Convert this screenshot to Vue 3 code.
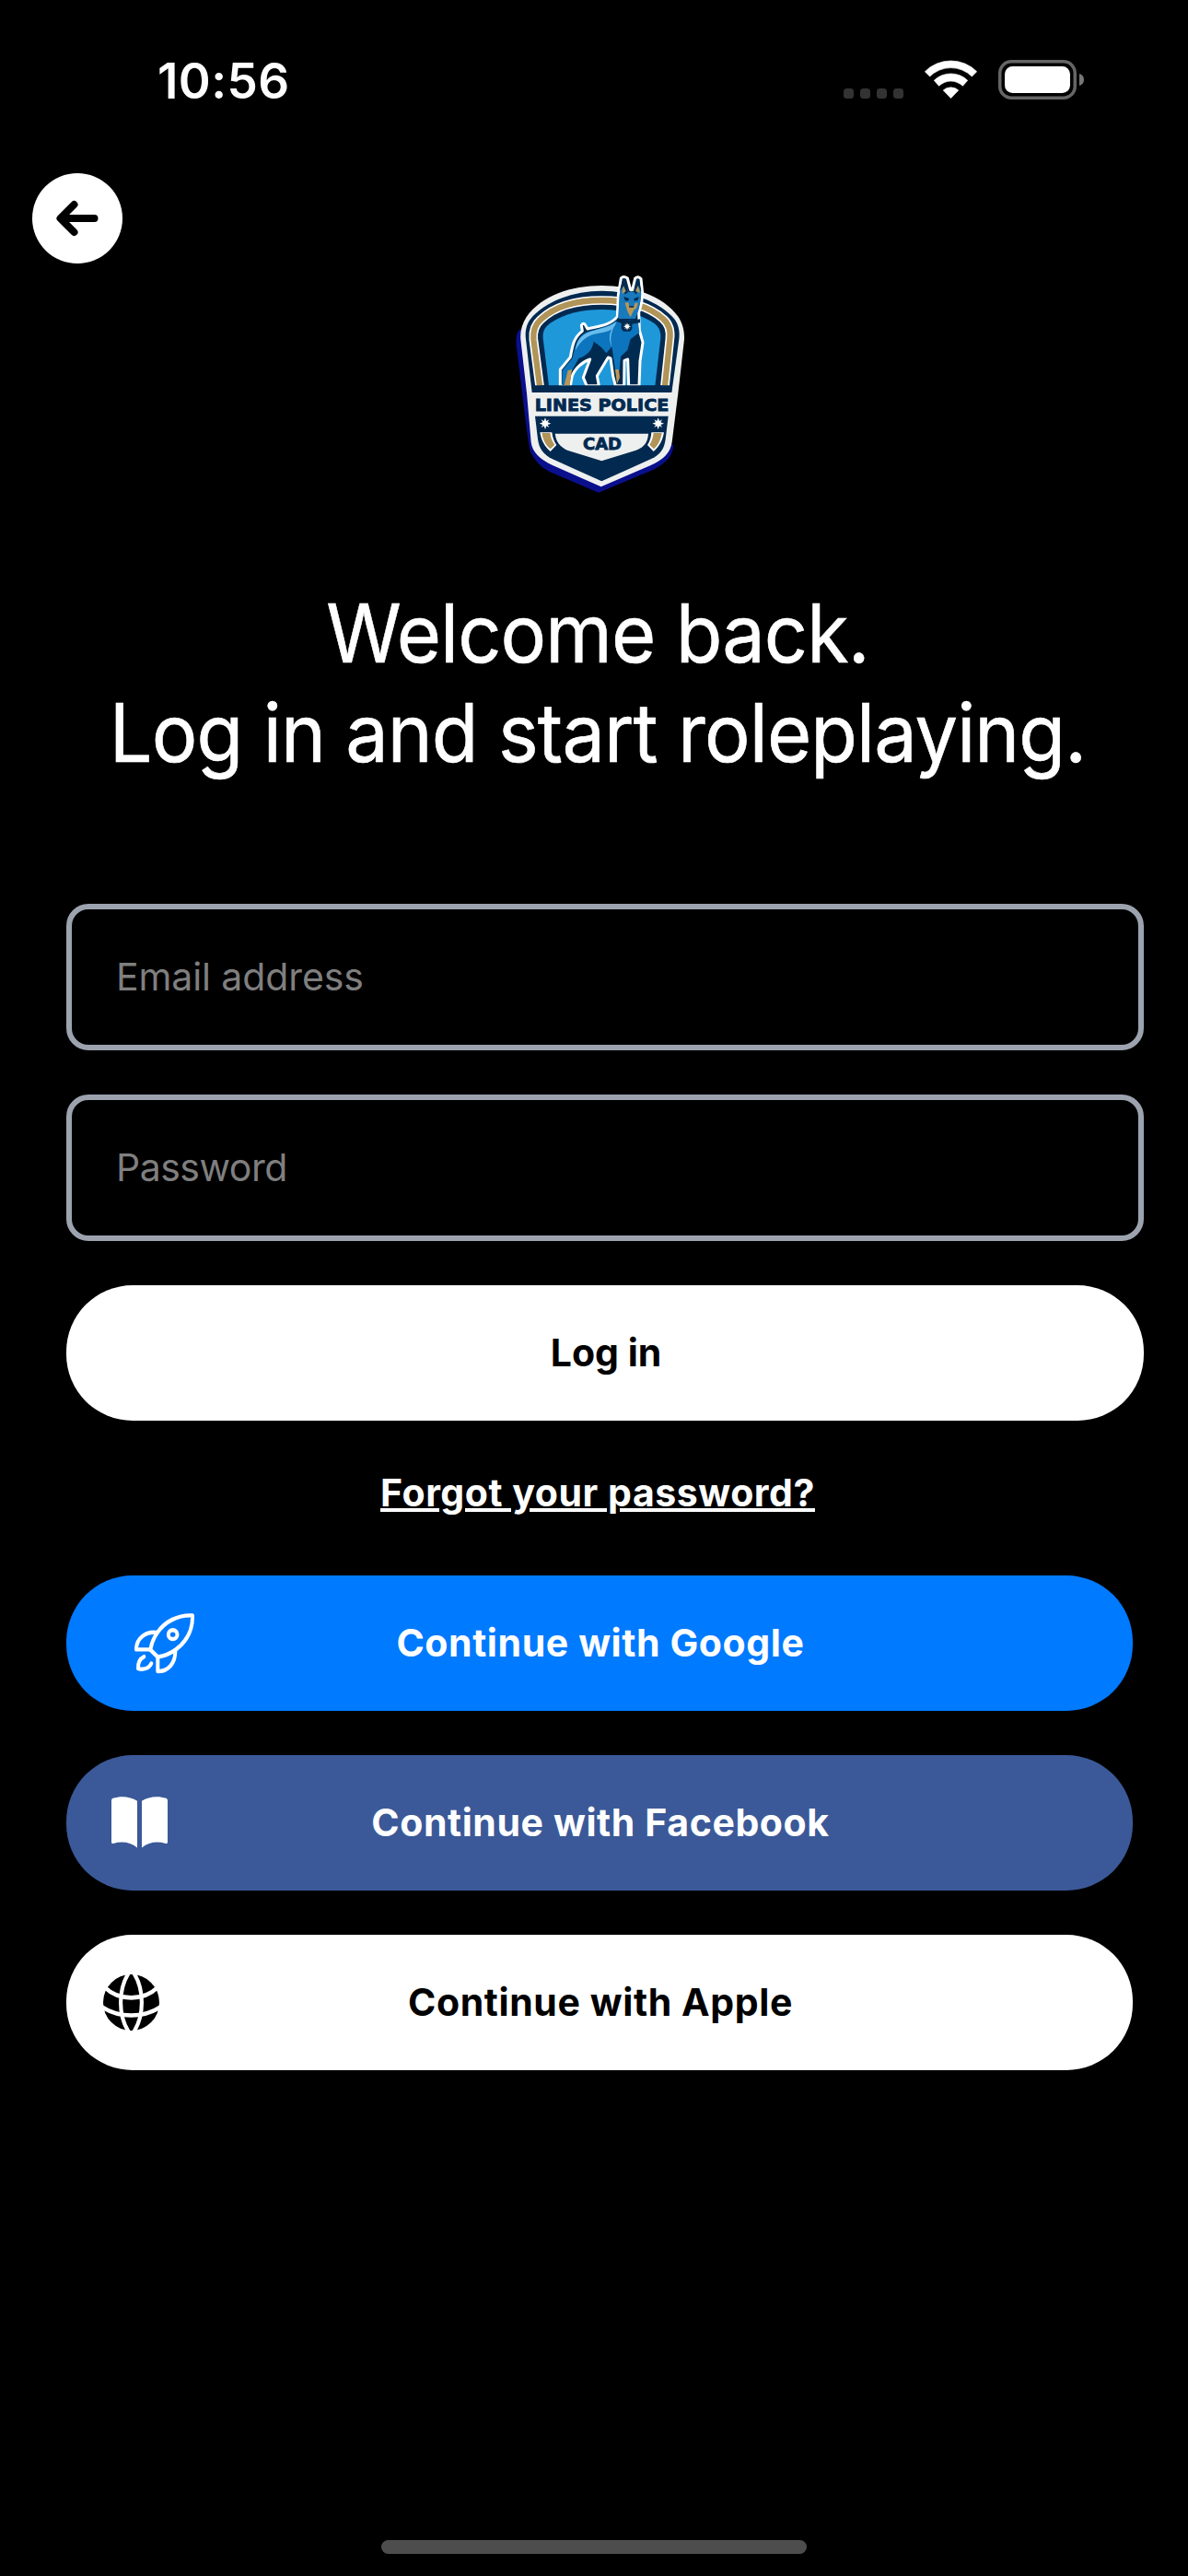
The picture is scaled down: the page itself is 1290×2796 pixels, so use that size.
<script setup>
import { ref } from 'vue'

const email = ref('')
const password = ref('')
const star = 'M0-19 4-8 13-13 8-4 19 0 8 4 13 13 4 8 0 19-4 8-13 13-8 4-19 0-8-4-13-13-4-8Z'
</script>

<template>
  <main class="screen">
    <header class="status">
      <time class="clock">10:56</time>
      <div class="indicators">
        <div class="cell"><i v-for="n in 4" :key="n"></i></div>
        <svg class="wifi" viewBox="371 75 172 126" fill="#fff" stroke="#fff" stroke-width="2" stroke-linejoin="round">
          <path d="M372 113A120 120 0 0 1 542 113L526 129A98 98 0 0 0 388 129Z" />
          <path d="M402 142A79 79 0 0 1 512 142L496 160A56 56 0 0 0 418 160Z" />
          <path d="M432 174A38 38 0 0 1 482 174L457 200Z" />
        </svg>
        <svg class="battery" viewBox="0 0 94 43">
          <rect x="1.75" y="1.75" width="81.5" height="39.5" rx="12.5" fill="none" stroke="#666" stroke-width="3.5" />
          <rect x="7" y="7" width="71" height="29" rx="8.5" fill="#fff" />
          <path d="M88 15C91.500 16 93 18.500 93 21.500S91.500 27 88 28Z" fill="#777" />
        </svg>
      </div>
    </header>

    <button class="back" aria-label="Back">
      <svg viewBox="0 0 98 98" fill="none" stroke="#000" stroke-width="8" stroke-linecap="round" stroke-linejoin="round">
        <path d="M67.500 49H31M45.500 34 30.500 49 45.500 64" />
        <path d="M31 49 38 43V55Z" fill="#000" stroke="none" />
      </svg>
    </button>

    <svg class="logo" viewBox="0 30 660 780">
      <path fill="#0a0f8c" d="M74 232C62 244 60 262 62 285L96 560L104 615C111 650 138 680 172 697L330 764L505 691C548 671 572 645 574 610Z" />
      <path fill="#eef0f0" d="M340 90C440 90 540 122 590 192C605 215 610 240 609 265L589 440L569 600C564 632 545 655 500 675L338 745L180 675C138 655 114 632 110 600L96 440L76 265C74 240 80 215 95 192C145 122 240 90 340 90Z" />
      <path fill="#022a50" d="M340 107C430 107 530 140 578 200C591 218 595 240 592 265L568 438H113L93 265C90 240 94 218 107 200C155 140 250 107 340 107Z" />
      <g fill="none">
        <path stroke="#fff" stroke-width="29" d="M138 416L118 265C115 235 124 216 142 200C190 155 265 138 340 138C415 138 492 155 540 198C560 215 566 235 562 265L546 416" />
        <path stroke="#b19458" stroke-width="19" d="M138 416L118 265C115 235 124 216 142 200C190 155 265 138 340 138C415 138 492 155 540 198C560 215 566 235 562 265L546 416" />
      </g>
      <path fill="#1f98da" d="M168 416L149 262C147 238 155 225 175 211C220 180 280 168 340 168C410 168 470 185 508 211C528 225 533 240 532 262L514 416Z" />

      <!-- Dog silhouette with its white keyline -->
      <path fill="#002b50" stroke="#fff" stroke-width="9" stroke-linejoin="round" d="M403 66Q411 57 424 66L434 104H440L449 66Q459 57 468 68L473 115L470 145L461 178L463 235L474 275L465 335L462 416H428L425 330L414 334L413 416H385L377 385L369 327L361 324L325 384L331 416H291L280 389L302 330C277 338 250 362 243 388L238 416H205V363L238 323C245 282 250 258 277 238L274 219Q281 209 287 219L294 231C330 222 370 218 391 191L394 120Z" />
      <path fill="#0c75bd" d="M391 202C365 226 329 228 290 242C260 255 252 291 245 326L211 367V414H235L242 369L265 327C295 318 311 295 314 272C332 285 344 293 355 310L373 289L385 368L398 365L402 321L424 300L434 264L463 243L458 204Z" />
      <path fill="#68bcec" d="M388 207C361 230 322 230 290 245C265 258 257 278 255 301C273 263 300 250 329 245C370 240 382 230 388 207ZM388 207C363 239 360 265 374 291C364 258 374 235 388 207Z" />
      <path fill="#1979bd" d="M399 112L410 76L428 111H444L458 76L469 118L462 164L450 198H393Z" />
      <path fill="#002b50" d="M398 108L410 67L426 111L416 119L411 92ZM470 110L459 67L445 111L453 119L459 91ZM412 126L430 132L425 140L416 138ZM445 132L462 126L457 138L446 140ZM427 157H446L443 168H431Z" />
      <path fill="#bb9755" d="M411 90L419 109L406 116ZM458 90L465 113L450 108ZM416 146L427 144L430 161H444L449 146L458 146L454 163L444 171L434 193L424 174ZM218 414L230 366L243 363L236 414ZM384 363H396L399 389L390 410Z" />
      <path fill="#002b50" d="M391 196Q430 209 465 199V211L439 215V230L433 239H411L404 230V212L388 207Z" />
      <path :d="star" transform="translate(423 223) scale(.64)" fill="#fff" />
      <path fill="#022a50" d="M113 415H570L567 438H115Z" />

      <text class="crest-text" x="122" y="498" textLength="437" lengthAdjust="spacingAndGlyphs" font-size="54">LINES POLICE</text>

      <path fill="#022a50" d="M123 515H557L548 590C544 620 532 640 500 655L340 727L180 655C150 640 136 620 132 590Z" />
      <path fill="#eef0f0" d="M188 572H492C490 599 480 615 452 626L340 661L228 626C204 614 192 600 188 572Z" />
      <path fill="#fff" d="M139 568H178C180 585 185 597 193 609L173 630C154 614 144 596 139 568ZM502 568H543C538 596 528 614 509 630L489 609C497 597 501 585 502 568Z" />
      <path fill="#b19458" d="M145 570H172C174 586 179 598 187 608L173 622C156 608 149 592 145 570ZM509 570H536C532 592 525 608 510 622L496 608C503 598 507 586 509 570Z" />
      <path :d="star" transform="translate(156 539)" fill="#fff" />
      <path :d="star" transform="translate(524 539)" fill="#fff" />
      <text class="crest-text" x="279" y="624" textLength="126" lengthAdjust="spacingAndGlyphs" font-size="53">CAD</text>
    </svg>

    <h1>Welcome back.<br />Log in and start roleplaying.</h1>

    <form class="form" @submit.prevent>
      <input v-model="email" type="email" class="email" placeholder="Email address" />
      <input v-model="password" type="password" class="password" placeholder="Password" />
      <button class="pill login"><span>Log in</span></button>
    </form>

    <a class="forgot">Forgot your password?</a>

    <section class="social">
      <button class="pill google">
        <svg class="rocket" viewBox="282 159 208 188" preserveAspectRatio="none" fill="none" stroke="#fff" stroke-width="12" stroke-linecap="round" stroke-linejoin="round">
          <path d="M477 171C430 169 388 188 362 222C349 239 343 253 340 272L364 293C386 290 405 283 423 271C461 245 479 214 477 171Z" />
          <path d="M360 221C323 217 294 239 294 271H340M364 293V335C400 335 422 309 421 274" />
          <path d="M319 292C305 298 299 312 300 327C317 331 335 327 343 312" />
          <ellipse cx="413" cy="227" rx="14.500" ry="13" />
        </svg>
        <span>Continue with Google</span>
      </button>
      <button class="pill facebook">
        <svg class="book" viewBox="213 703 183 150" preserveAspectRatio="none" fill="#fff">
          <path d="M213 714Q213 710 218 708C245 700 275 703 297 716V853C275 837 247 833 219 841Q213 842 213 837Z" />
          <path d="M396 714Q396 710 391 708C364 700 334 703 312 716V853C334 837 362 833 390 841Q396 842 396 837Z" />
        </svg>
        <span>Continue with Facebook</span>
      </button>
      <button class="pill apple">
        <svg class="globe" viewBox="186 1225 183 165" preserveAspectRatio="none">
          <ellipse cx="277.500" cy="1307.500" rx="91.500" ry="82.500" fill="#000" />
          <g fill="none" stroke="#fff" stroke-width="12.500">
            <path d="M271 1218C234 1269 234 1346 271 1397M284 1218C321 1269 321 1346 284 1397" />
            <path d="M190 1262C238 1304 317 1304 365 1262M180 1319C235 1354 320 1354 375 1319" />
          </g>
        </svg>
        <span>Continue with Apple</span>
      </button>
    </section>

    <div class="home-bar"></div>
  </main>
</template>

<style>
body {
  background: #000;
}
</style>

<style scoped>
.screen {
  box-sizing: border-box;
  display: flex;
  flex-direction: column;
  width: 1290px;
  height: 2796px;
  overflow: hidden;
  background: #000;
  color: #fff;
  font-family: Inter, "Liberation Sans", sans-serif;
}
svg {
  display: block;
  flex: none;
}
button {
  padding: 0;
  border: 0;
  font-family: inherit;
}
.status {
  box-sizing: border-box;
  display: flex;
  justify-content: space-between;
  height: 188px;
  padding: 58px 112px 0 171px;
}
.clock {
  font-size: 53px;
  line-height: 60px;
  font-weight: 600;
  letter-spacing: 0.4px;
}
.indicators {
  display: flex;
  align-items: flex-start;
  padding-top: 7px;
}
.cell {
  display: flex;
  gap: 7px;
  margin: 31px 23px 0 0;
}
.cell i {
  width: 11px;
  height: 11px;
  border-radius: 3.5px;
  background: #333;
}
.wifi {
  width: 57px;
  height: 42px;
  margin-right: 23px;
}
.battery {
  width: 94px;
  height: 43px;
}
.back {
  width: 98px;
  height: 98px;
  margin-left: 35px;
  border-radius: 50%;
  background: #fff;
}
.logo {
  width: 220px;
  height: 260px;
  margin: 4px 0 0 540px;
}
.crest-text {
  fill: #022a50;
  stroke: #022a50;
  stroke-width: 2.5px;
  font-family: "DejaVu Sans", sans-serif;
  font-weight: 700;
}
h1 {
  margin: 83px 0 0;
  width: 1298px;
  font-size: 87.5px;
  line-height: 108px;
  font-weight: 400;
  letter-spacing: -0.95px;
  text-align: center;
  white-space: nowrap;
  transform: scaleX(0.946);
  -webkit-text-stroke: 0.6px #fff;
}
.form {
  display: flex;
  flex-direction: column;
  gap: 48px;
  margin: 132px 48px 0 72px;
}
input {
  box-sizing: border-box;
  width: 100%;
  height: 159px;
  padding: 0 48px 2px;
  border: 6px solid #9ca3af;
  border-radius: 24px;
  background: #000;
  color: #fff;
  font-family: inherit;
  font-size: 41px;
  letter-spacing: -0.1px;
  outline: 0;
}
.password {
  letter-spacing: -0.5px;
}
input::placeholder {
  color: #7f7f7f;
  opacity: 1;
}
.pill {
  display: grid;
  align-items: center;
  width: 100%;
  height: 147px;
  border-radius: 72px;
  color: #fff;
  font-size: 41px;
  font-weight: 700;
  letter-spacing: 0.6px;
}
.pill > * {
  grid-area: 1 / 1;
}
.pill span {
  justify-self: center;
  padding: 0 0 2px 2px;
}
.login {
  letter-spacing: 0;
}
.login,
.apple {
  background: #fff;
  color: #000;
}
.google {
  background: #007aff;
}
.facebook {
  background: #3b5998;
}
.forgot {
  align-self: flex-start;
  margin: 53px 0 0 413px;
  font-size: 41px;
  line-height: 50px;
  font-weight: 700;
  letter-spacing: 0.55px;
  white-space: nowrap;
  text-decoration: underline;
  text-decoration-thickness: 4px;
  text-underline-offset: 2px;
}
.social {
  display: flex;
  flex-direction: column;
  gap: 48px;
  margin: 65px 60px 0 72px;
}
.rocket {
  width: 69.3px;
  height: 69.5px;
  margin-left: 72px;
}
.book {
  width: 61px;
  height: 55.5px;
  margin: 0 0 1px 49px;
}
.globe {
  width: 61px;
  height: 61px;
  margin-left: 40px;
}
.home-bar {
  align-self: center;
  width: 462px;
  height: 15px;
  margin: auto 0 24px;
  border-radius: 8px;
  background: #4d4d4d;
}
</style>
